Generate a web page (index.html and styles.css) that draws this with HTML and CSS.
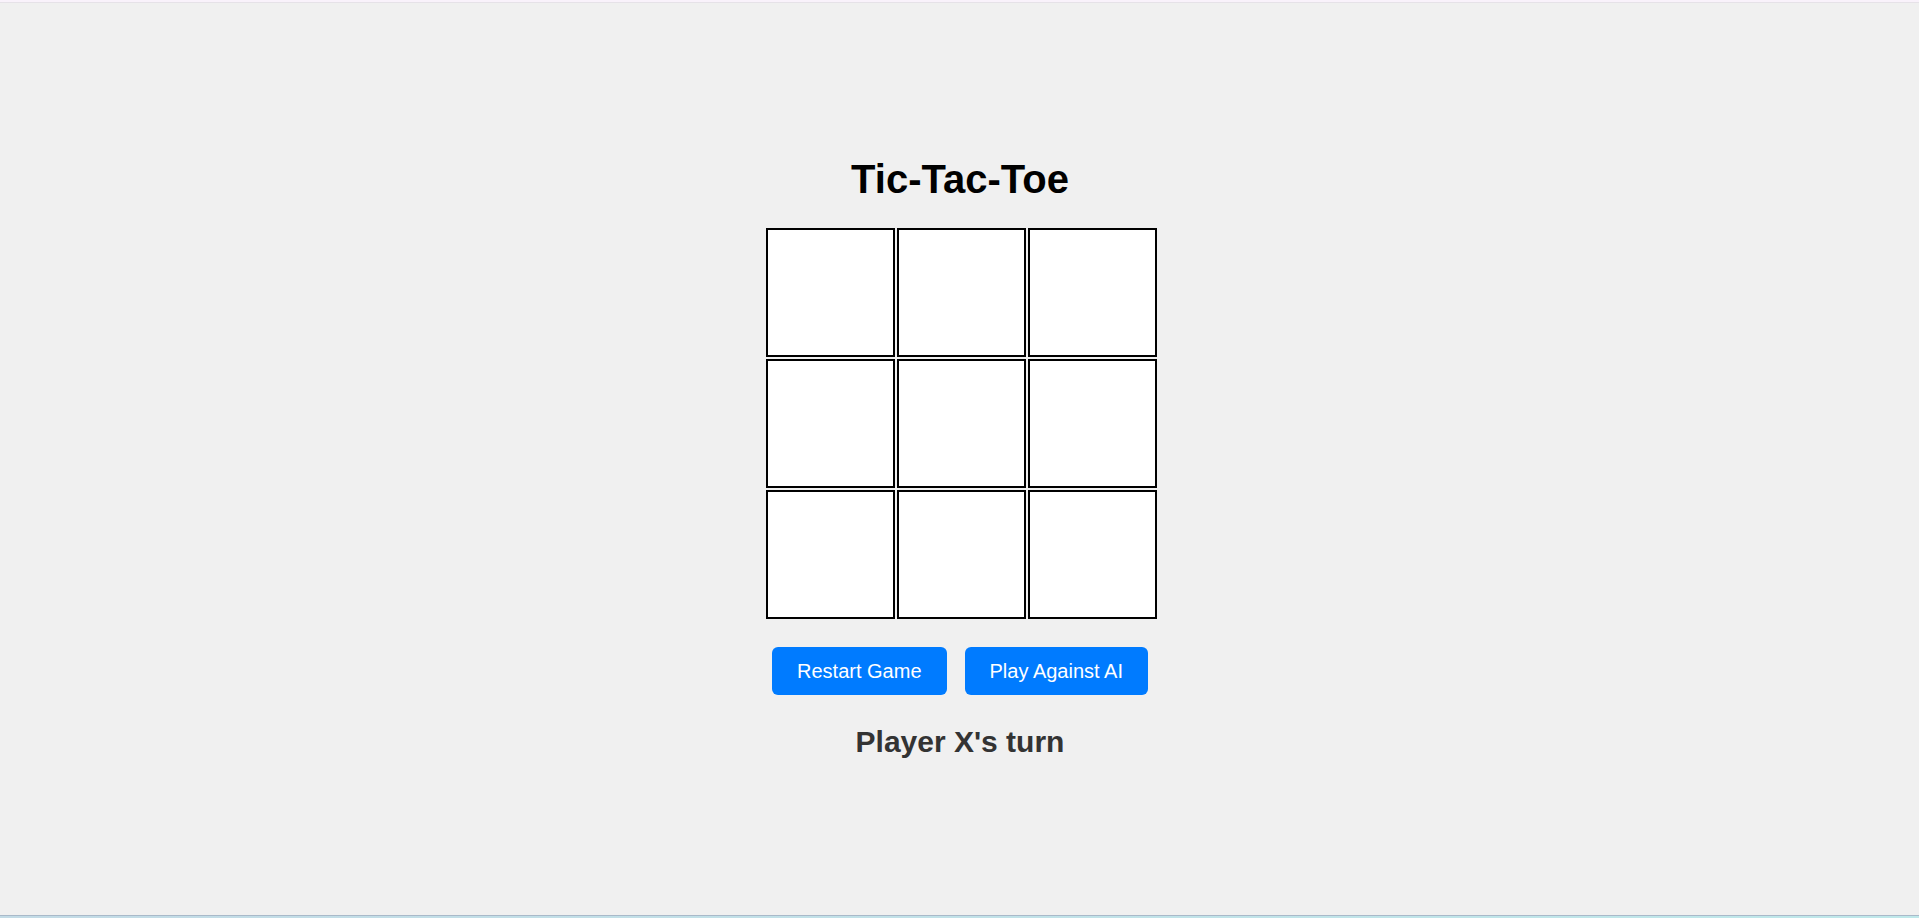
FILE: index.html
```html
<!DOCTYPE html>
<html lang="en">
<head>
<meta charset="utf-8">
<title>Tic-Tac-Toe</title>
<link rel="stylesheet" href="styles.css">
</head>
<body>
<div class="top-strip"></div>
<main class="game">
  <h1 class="title">Tic-Tac-Toe</h1>
  <div class="board">
    <div class="cell"></div>
    <div class="cell"></div>
    <div class="cell"></div>
    <div class="cell"></div>
    <div class="cell"></div>
    <div class="cell"></div>
    <div class="cell"></div>
    <div class="cell"></div>
    <div class="cell"></div>
  </div>
  <div class="controls">
    <button class="btn">Restart Game</button>
    <button class="btn">Play Against AI</button>
  </div>
  <div class="status">Player X's turn</div>
</main>
<div class="bottom-strip"></div>
</body>
</html>
```

FILE: styles.css
```css
html, body {
  margin: 0;
  padding: 0;
}
body {
  height: 918px;
  overflow: hidden;
  background: #f0f0f0;
  font-family: "Liberation Sans", Arial, sans-serif;
  display: flex;
  flex-direction: column;
}
.top-strip {
  height: 2px;
  background: #f9f2fb;
  border-bottom: 1px solid #e6e2e8;
}
.bottom-strip {
  height: 2px;
  background: linear-gradient(90deg, #c3dbe6, #bfe8ea);
  border-top: 1px solid #a9b9c9;
}
.game {
  flex: 1;
  display: flex;
  flex-direction: column;
  align-items: center;
  padding-top: 153px;
  padding-left: 1px;
}
.title {
  margin: 0;
  font-size: 40px;
  line-height: 46px;
  font-weight: bold;
  color: #000;
}
.board {
  margin-top: 26px;
  margin-left: 3px;
  display: grid;
  grid-template-columns: repeat(3, 129px);
  grid-auto-rows: 129px;
  gap: 2px;
}
.cell {
  box-sizing: border-box;
  background: #fff;
  border: 2px solid #000;
}
.controls {
  margin-top: 28px;
  display: flex;
  gap: 18px;
}
.btn {
  font-family: "Liberation Sans", Arial, sans-serif;
  font-size: 20px;
  line-height: 23px;
  padding: 12.5px 25px;
  border: none;
  border-radius: 6px;
  background: #007bff;
  color: #fff;
  cursor: pointer;
}
.status {
  margin-top: 30px;
  font-size: 30px;
  line-height: 34px;
  font-weight: bold;
  color: #333;
}
```
